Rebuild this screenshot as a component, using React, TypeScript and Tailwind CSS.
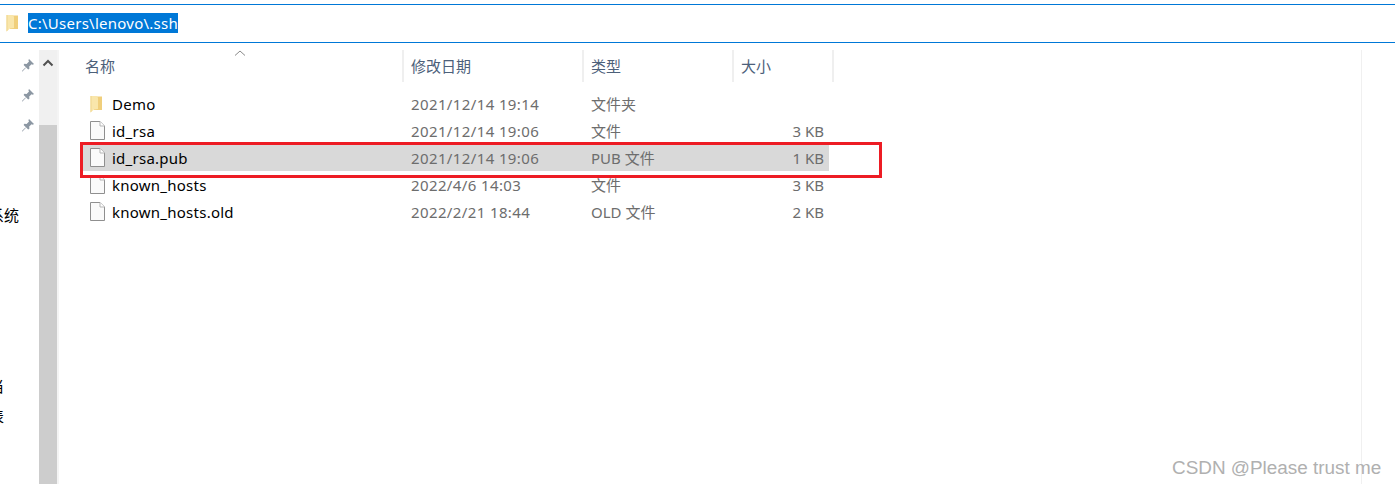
import React from "react";

const font = { fontFamily: '"Noto Sans","Noto Sans CJK SC",sans-serif' };

function Folder() {
  return (
    <svg width="12" height="18" viewBox="0 0 12 18">
      <path d="M4 1.5 L12 1.5 L12 15 L4 15 Z" fill="#f0cf7c" />
      <path d="M0.5 1 L7 1 L8 3 L8 14 L4 14.5 L0.5 17.5 Z" fill="#f9e6ab" />
      <path d="M0.5 1 L0.5 17.5 L1.5 16.6 L1.5 1 Z" fill="#f0d58e" />
    </svg>
  );
}

function FileIcon() {
  return (
    <svg width="15" height="19" viewBox="0 0 15 19">
      <path d="M0.5 0.5 H10 L14.5 5 V18.5 H0.5 Z" fill="#fafafa" stroke="#8f8f8f" />
      <path d="M10 0.5 V5 H14.5" fill="#ffffff" stroke="#b5b5b5" />
    </svg>
  );
}

function Pin() {
  return (
    <svg width="14" height="14" viewBox="0 0 14 14">
      <path d="M8 1 L13 6 L11.8 6.8 L10.6 6.2 L8.2 8.6 L8.4 10.8 L7.2 11.6 L2.6 7 L3.4 5.8 L5.6 6 L8 3.6 L7.4 2.2 Z" fill="#8c97a3" />
      <path d="M4.4 9.6 L1 13 L1 13.4 L1.4 13.4 L4.8 10 Z" fill="#8c97a3" />
    </svg>
  );
}

const rows = [
  { name: "Demo", date: "2021/12/14 19:14", type: "文件夹", size: "", folder: true },
  { name: "id_rsa", date: "2021/12/14 19:06", type: "文件", size: "3 KB" },
  { name: "id_rsa.pub", date: "2021/12/14 19:06", type: "PUB 文件", size: "1 KB", selected: true },
  { name: "known_hosts", date: "2022/4/6 14:03", type: "文件", size: "3 KB" },
  { name: "known_hosts.old", date: "2022/2/21 18:44", type: "OLD 文件", size: "2 KB" },
];

export default function App() {
  return (
    <div className="relative h-[484px] w-[1395px] overflow-hidden bg-white text-[15px] leading-5" style={font}>
      <div className="pt-1">
        <div className="flex h-[39px] items-center border-y border-[#0078d7] pb-[2px] pl-[6px]">
          <Folder />
          <span className="ml-[10px] bg-[#0078d7] tracking-[0.25px] text-[#ffffff]">C:\Users\lenovo\.ssh</span>
        </div>
      </div>

      <div className="flex h-[441px] pt-[7px]">
        {/* Navigation pane */}
        <div className="flex w-[39px] flex-col overflow-hidden whitespace-nowrap text-black">
          <div className="mr-1 mt-[8px] flex flex-col gap-4 self-end">
            <Pin />
            <Pin />
            <Pin />
          </div>
          <div className="-ml-[11px] mt-[73px] h-5">系统</div>
          <div className="-ml-[11px] mt-[151px] h-5">当</div>
          <div className="-ml-[11px] mt-[10px] h-5">表</div>
        </div>

        {/* Scrollbar */}
        <div className="flex w-5 flex-col border-r-2 border-[#f4f4f4] bg-[#f0f0f0]">
          <div className="flex h-[25px] items-center justify-center">
            <svg width="12" height="8" viewBox="0 0 12 8">
              <path d="M1.5 6.5 L6 2 L10.5 6.5" fill="none" stroke="#505050" strokeWidth="2" />
            </svg>
          </div>
          <div className="mt-[50px] flex-1 bg-[#cdcdcd]" />
        </div>

        {/* File list */}
        <div className="relative flex-1 pl-[22px]">
          <div className="flex h-[32px] text-[#4c607a]">
            <div className="relative flex w-[323px] items-center border-r-2 border-[#efefef] pl-[4px]">
              名称
              <svg width="12" height="6" viewBox="0 0 12 6" className="absolute left-[153px] top-0">
                <path d="M1 5.5 L6 1 L11 5.5" fill="none" stroke="#8a8a8a" />
              </svg>
            </div>
            <div className="flex w-[180px] items-center border-r-2 border-[#efefef] pl-[7px]">修改日期</div>
            <div className="flex w-[150px] items-center border-r-2 border-[#efefef] pl-[7px]">类型</div>
            <div className="flex w-[100px] items-center border-r-2 border-[#efefef] pl-[7px]">大小</div>
          </div>
          <div className="mt-2">
            {rows.map((r) => (
              <div
                key={r.name}
                className={`flex h-[27px] w-[748px] items-center ${r.selected ? "bg-[#d9d9d9]" : ""}`}
              >
                <div className="flex w-[322px] items-center pl-[9px] text-black">
                  <span className="flex w-[15px] justify-start">{r.folder ? <Folder /> : <FileIcon />}</span>
                  <span className="ml-[7px] tracking-[0.25px]">{r.name}</span>
                </div>
                <div className="w-[180px] pl-[8px] tracking-[0.38px] text-[#6d6d6d]">{r.date}</div>
                <div className="w-[150px] pl-[8px] text-[#6d6d6d]">{r.type}</div>
                <div className="w-[91px] text-right text-[#6d6d6d]">{r.size}</div>
              </div>
            ))}
          </div>
          <div className="absolute bottom-0 left-[1302px] top-0 w-px bg-[#f0f0f0]" />
        </div>
      </div>

      {/* Annotation */}
      <div className="absolute left-[80px] top-[142px] h-[36px] w-[802px] border-[3px] border-[#ed1c24]" />
      <div
        className="absolute left-[1172px] top-[456px] text-[18.9px] leading-6 text-[#b0b0b0]"
        style={{ fontFamily: '"Liberation Sans",sans-serif' }}
      >
        CSDN @Please trust me
      </div>
    </div>
  );
}
